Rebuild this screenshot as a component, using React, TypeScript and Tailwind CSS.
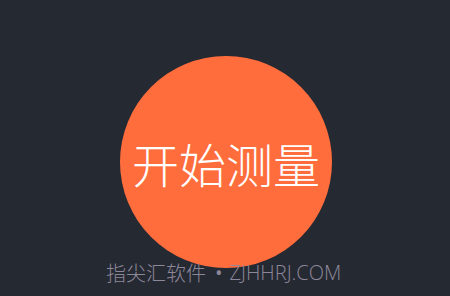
import React from 'react';

export default function App() {
  return (
    <div className="relative w-[450px] h-[296px] bg-[#252932] flex items-start justify-center overflow-hidden">
      {/* Start button */}
      <button
        type="button"
        className="mt-[56px] ml-[2px] w-[212px] h-[212px] rounded-full bg-[#ff6d3d] flex items-center justify-center"
      >
        <span className="text-white text-[47px] leading-none font-light font-['Noto_Sans_CJK_SC',serif]">
          开始测量
        </span>
      </button>

      {/* Watermark */}
      <div className="absolute left-[106px] top-[259px] flex items-center whitespace-nowrap text-[20px] leading-[28px] text-[#8e8799] font-light font-['Open_Sans','Noto_Sans_CJK_SC',sans-serif]">
        <span className="font-['Noto_Sans_CJK_SC',sans-serif]">指尖汇软件</span>
        <span className="ml-[9px] mr-[7px] font-normal">•</span>
        <span>ZJHHRJ.COM</span>
      </div>
    </div>
  );
}
